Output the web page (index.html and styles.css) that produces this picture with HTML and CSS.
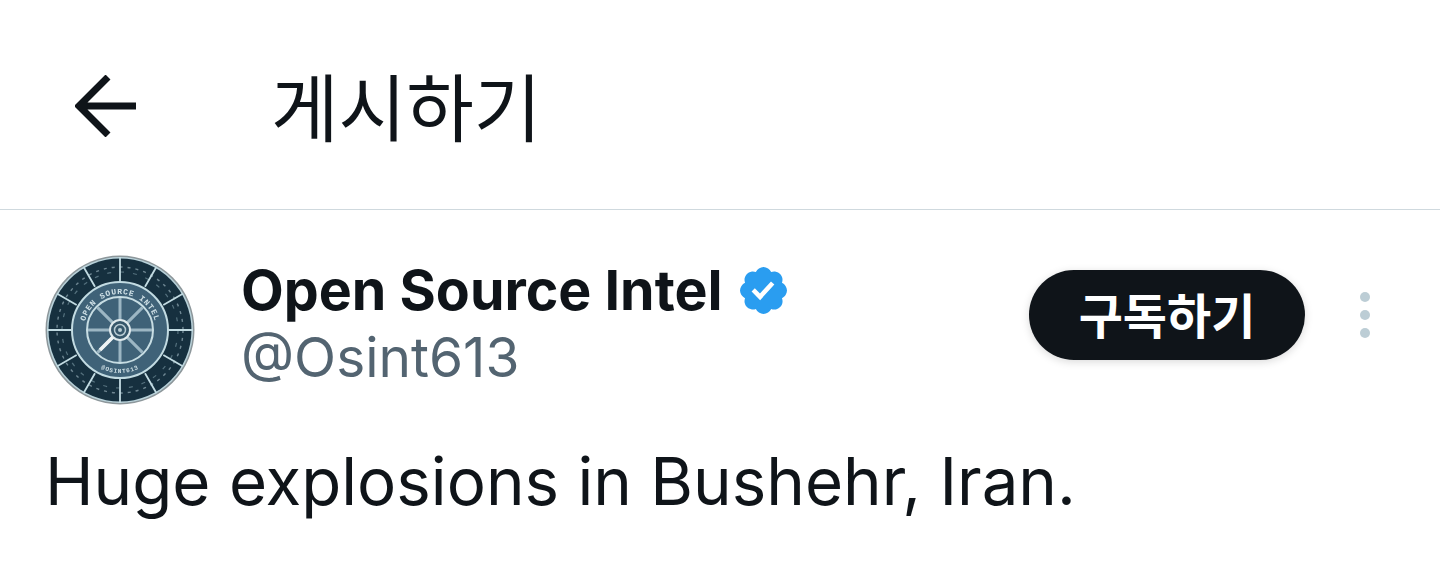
FILE: index.html
```html
<!DOCTYPE html>
<html lang="ko">
<head>
<meta charset="utf-8">
<title>게시하기</title>
<link rel="stylesheet" href="styles.css">
</head>
<body>
<header class="topbar">
  <svg class="back" viewBox="0 0 62 62" width="62" height="62"><path d="M61 31H7M33 2 4 31l29 29" fill="none" stroke="#0f1419" stroke-width="7"/></svg>
  <h1 class="title">게시하기</h1>
</header>
<main class="post">
  <div class="author">
    <svg class="avatar" viewBox="0 0 150 150" width="150" height="150">
      <defs><path id="arc" d="M39 75a36 36 0 0 1 72 0"/><path id="arcb" d="M32 75a43 43 0 0 0 86 0"/></defs>
      <circle cx="75" cy="75" r="74.5" fill="#8d979b"/>
      <circle cx="75" cy="75" r="73" fill="#b9d2da"/>
      <circle cx="75" cy="75" r="71.5" fill="#16303f"/>
      <circle cx="75" cy="75" r="63" fill="none" stroke="#6f8793" stroke-width="1.4" stroke-dasharray="3 5"/>
      <circle cx="75" cy="75" r="58" fill="none" stroke="#54707d" stroke-width="1.2" stroke-dasharray="4 9"/>
      <path class="dividers" d="M75 2v26M75 122v26M2 75h26M122 75h26M100 31.7 111.5 11.8M118.3 50 138.2 38.5M118.3 100 138.2 111.5M100 118.3 111.5 138.2M50 118.3 38.5 138.2M31.7 100 11.8 111.5M31.7 50 11.8 38.5M50 31.7 38.5 11.8"/>
      <circle cx="75" cy="75" r="48" fill="#3f6278" stroke="#c2dbe2" stroke-width="2"/>
      <circle cx="75" cy="75" r="33" fill="#3f6278" stroke="#c7dde3" stroke-width="2"/>
      <text class="avatar-label"><textPath href="#arc" startOffset="50%" text-anchor="middle">OPEN SOURCE INTEL</textPath></text>
      <text class="avatar-label small"><textPath href="#arcb" startOffset="50%" text-anchor="middle">@OSINT613</textPath></text>
      <path class="spokes" d="M75 43v64M43 75h64M52.4 52.4l45.2 45.2M97.600 52.4 52.4 97.600"/>
      <circle cx="75" cy="75" r="10" fill="#36566a" stroke="#dfe9ec" stroke-width="2"/>
      <circle cx="75" cy="75" r="5.500" fill="none" stroke="#b9ccd4" stroke-width="1.500"/>
      <circle cx="75" cy="75" r="2" fill="#b9ccd4"/>
      <path class="handle-line" d="M68 82 55 95"/>
    </svg>
    <div class="names">
      <div class="name-row">
        <span class="name">Open Source Intel</span>
        <svg class="badge" viewBox="0 0 22 22" width="55" height="55"><path fill="#2a9df0" d="M20.396 11c-.018-.646-.215-1.275-.57-1.816-.354-.54-.852-.972-1.438-1.246.223-.607.27-1.264.14-1.897-.131-.634-.437-1.218-.882-1.687-.47-.445-1.053-.75-1.687-.882-.633-.13-1.29-.083-1.897.14-.273-.587-.704-1.086-1.245-1.44S11.647 1.62 11 1.604c-.646.017-1.273.213-1.813.568s-.969.854-1.24 1.44c-.608-.223-1.267-.272-1.902-.14-.635.13-1.22.436-1.69.882-.445.47-.749 1.055-.878 1.688-.13.633-.08 1.29.144 1.896-.587.274-1.087.705-1.443 1.245-.356.54-.555 1.17-.574 1.817.02.647.218 1.276.574 1.817.356.54.856.972 1.443 1.245-.224.606-.274 1.263-.144 1.896.13.634.433 1.218.877 1.688.47.443 1.054.747 1.687.878.633.132 1.29.084 1.897-.136.274.586.705 1.084 1.246 1.439.54.354 1.17.551 1.816.569.647-.016 1.276-.213 1.817-.567s.972-.854 1.245-1.44c.604.239 1.266.296 1.903.164.636-.132 1.22-.447 1.68-.907.46-.46.776-1.044.908-1.681s.075-1.299-.165-1.903c.586-.274 1.084-.705 1.439-1.246.354-.54.551-1.17.569-1.816z"/><path fill="#fff" d="M9.662 14.85l-3.429-3.428 1.293-1.302 2.072 2.072 4.4-4.794 1.347 1.246z"/></svg>
      </div>
      <div class="handle">@Osint613</div>
    </div>
    <div class="actions">
      <button class="subscribe">구독하기</button>
      <div class="more"><i></i><i></i><i></i></div>
    </div>
  </div>
  <p class="text">Huge explosions in Bushehr, Iran.</p>
</main>
</body>
</html>
```

FILE: styles.css
```css
* { box-sizing: border-box; }
html, body { margin: 0; padding: 0; background: #fff; }
body {
  width: 1440px;
  height: 564px;
  overflow: hidden;
  color: #0f1419;
  font-family: "Inter", "Noto Sans CJK KR", sans-serif;
}
.topbar {
  height: 210px;
  border-bottom: 1px solid #cfd9de;
  display: flex;
  align-items: center;
  padding: 0 0 0 75px;
}
.back { flex: none; margin-top: 3px; }
.title {
  margin: 0 0 0 134px;
  font-family: "Noto Sans CJK KR", sans-serif;
  font-size: 73.5px;
  font-weight: 400;
  line-height: 1;
}
.post { padding: 45px 0 0 45px; }
.author { display: flex; align-items: flex-start; }
.avatar { flex: none; display: block; filter: blur(.5px); }
.dividers { fill: none; stroke: #c2dbe2; stroke-width: 1.8; }
.spokes { fill: none; stroke: #9cb6c3; stroke-width: 3; }
.handle-line { fill: none; stroke: #eef3f4; stroke-width: 3.6; }
.avatar-label { font-family: "Liberation Mono", monospace; font-size: 8px; font-weight: 700; fill: #cfe0e6; letter-spacing: .8px; }
.avatar-label.small { font-size: 6px; }
.names { margin-left: 46px; flex: none; }
.name-row { display: flex; align-items: center; height: 70px; }
.name { font-size: 55.5px; font-weight: 700; line-height: 70px; }
.badge { margin-left: 13px; }
.handle { font-size: 55px; color: #536471; line-height: 64px; }
.actions { margin-left: auto; display: flex; align-items: center; padding: 15px 70px 0 0; }
.subscribe {
  width: 276px;
  height: 90px;
  border: 0;
  border-radius: 45px;
  padding: 0 0 4px;
  background: #0f1419;
  color: #fff;
  font-family: "Noto Sans CJK KR", sans-serif;
  font-size: 48px;
  font-weight: 700;
  box-shadow: 0 2px 8px rgba(0,0,0,.15);
}
.more { margin-left: 55px; display: flex; flex-direction: column; gap: 8px; }
.more i { display: block; width: 10px; height: 10px; border-radius: 50%; background: #bccdd5; }
.text { margin: 38px 0 0 0; font-size: 65.4px; line-height: 78px; font-weight: 400; }
```
